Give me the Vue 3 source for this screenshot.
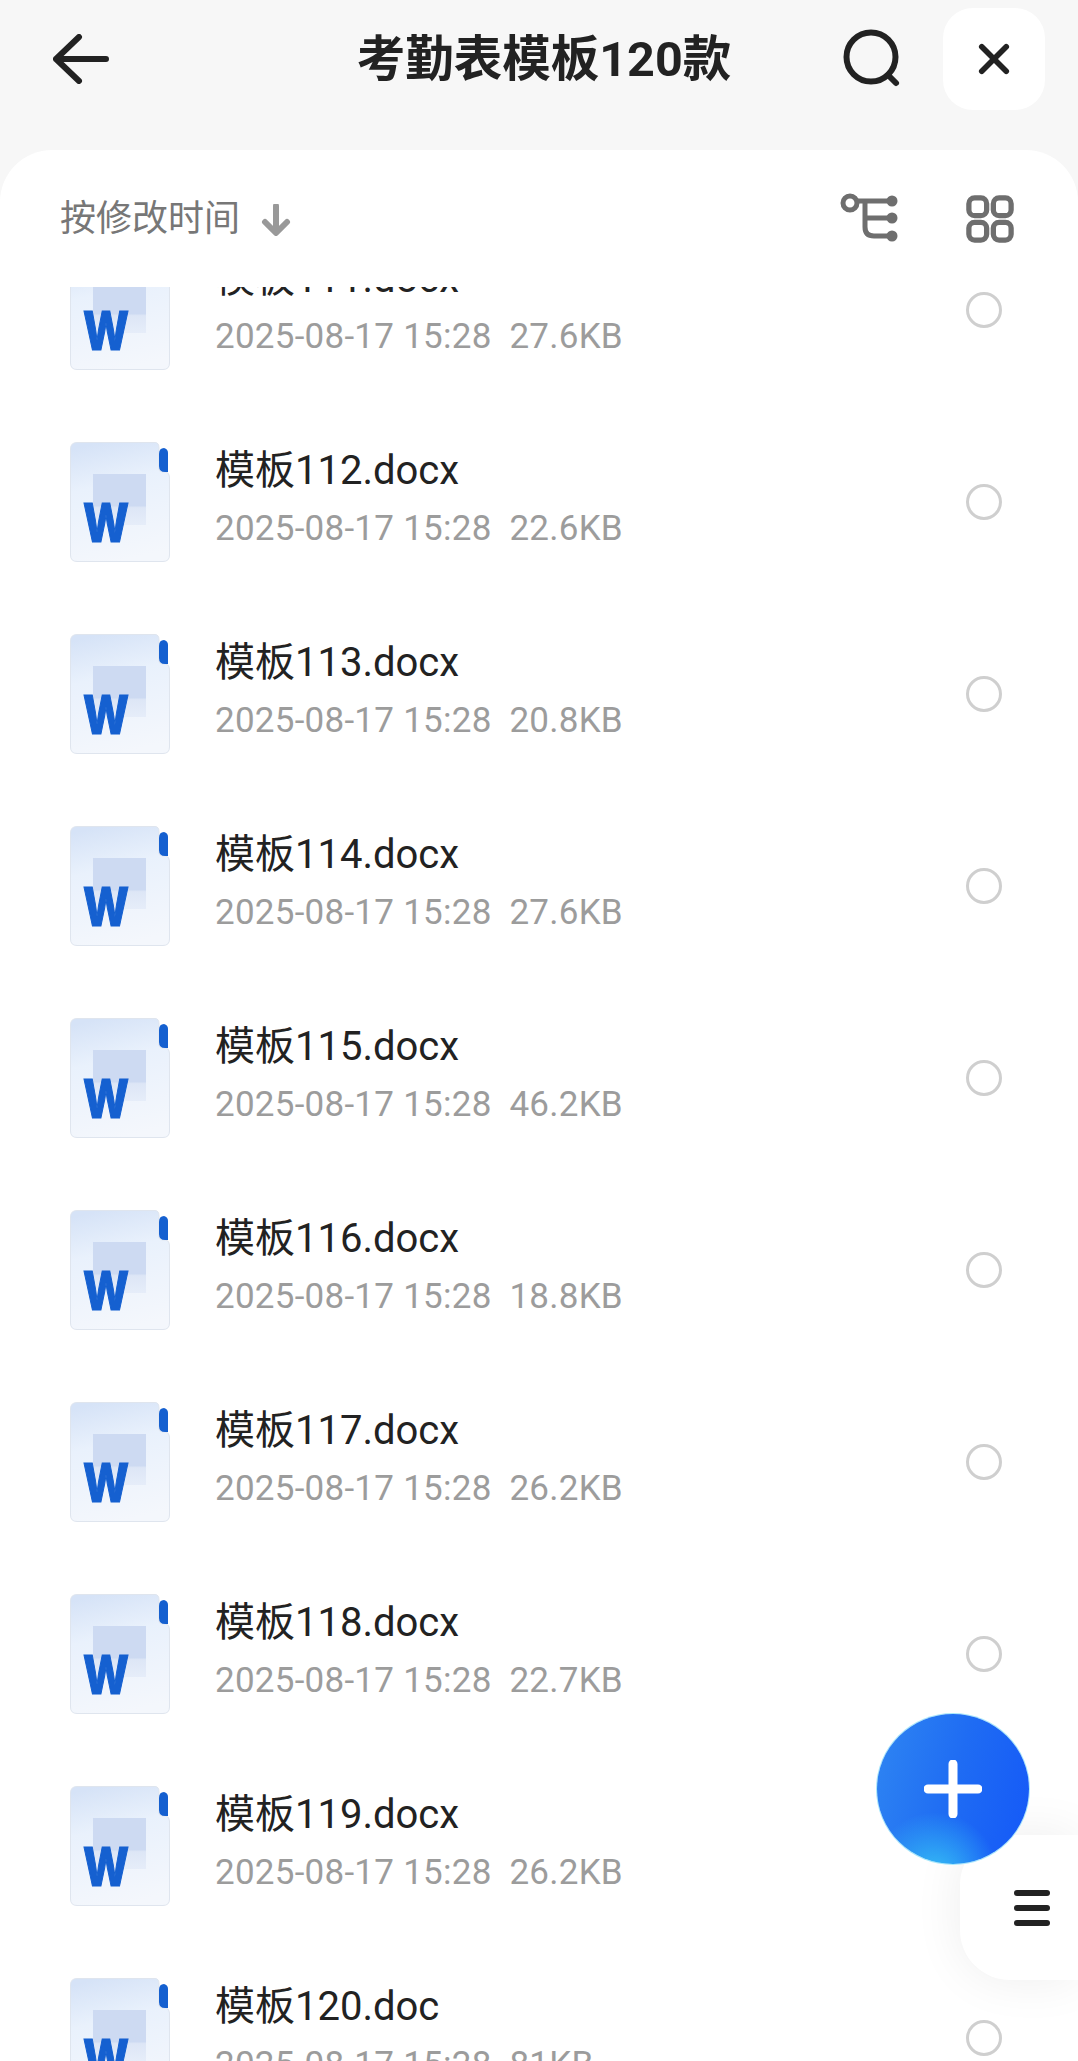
<script setup>
const files = [
  { name: '模板111.docx', size: '27.6KB' },
  { name: '模板112.docx', size: '22.6KB' },
  { name: '模板113.docx', size: '20.8KB' },
  { name: '模板114.docx', size: '27.6KB' },
  { name: '模板115.docx', size: '46.2KB' },
  { name: '模板116.docx', size: '18.8KB' },
  { name: '模板117.docx', size: '26.2KB' },
  { name: '模板118.docx', size: '22.7KB' },
  { name: '模板119.docx', size: '26.2KB' },
  { name: '模板120.doc', size: '81KB' },
]
</script>

<template>
  <div class="page">
    <header class="header">
      <svg class="back" width="56" height="50" viewBox="0 0 56 50" fill="none">
        <path d="M26 3 L3 25 L26 47 M3 25 H53" stroke="#222" stroke-width="6" stroke-linecap="round" stroke-linejoin="round" />
      </svg>
      <h1 class="title">考勤表模板120款</h1>
      <svg class="search" width="60" height="60" viewBox="0 0 60 60" fill="none">
        <circle cx="28" cy="28" r="24.5" stroke="#222" stroke-width="6" />
        <path d="M45 46 L53 54" stroke="#222" stroke-width="6" stroke-linecap="round" />
      </svg>
      <div class="close">
        <svg width="32" height="32" viewBox="0 0 34 34" fill="none">
          <path d="M4 4 L30 30 M30 4 L4 30" stroke="#222" stroke-width="6" stroke-linecap="round" />
        </svg>
      </div>
    </header>

    <section class="sheet">
      <div class="toolbar">
        <span class="sort">按修改时间</span>
        <svg class="sort-arrow" width="30" height="32" viewBox="0 0 30 32" fill="none">
          <path d="M15 2 V28 M4 18 L15 29 L26 18" stroke="#999" stroke-width="6" stroke-linecap="round" stroke-linejoin="round" />
        </svg>
        <svg class="tree" width="60" height="52" viewBox="0 0 60 52" fill="none">
          <circle cx="10" cy="10" r="7" stroke="#6e6e6e" stroke-width="5" />
          <path d="M17 8 H52 M25 8 V34 Q25 43 34 43 H52 M25 25 H52" stroke="#6e6e6e" stroke-width="5" />
          <circle cx="52" cy="8" r="5.5" fill="#6e6e6e" />
          <circle cx="52" cy="25" r="5.5" fill="#6e6e6e" />
          <circle cx="52" cy="43" r="5.5" fill="#6e6e6e" />
        </svg>
        <svg class="grid" width="48" height="48" viewBox="0 0 50 50" fill="none" stroke="#6e6e6e" stroke-width="5.5">
          <rect x="3" y="3" width="18.5" height="18.5" rx="6" />
          <rect x="28.5" y="3" width="18.5" height="18.5" rx="6" />
          <rect x="3" y="28.5" width="18.5" height="18.5" rx="6" />
          <rect x="28.5" y="28.5" width="18.5" height="18.5" rx="6" />
        </svg>
      </div>

      <div class="list">
        <div class="rows">
          <div v-for="file in files" :key="file.name" class="row">
            <svg class="doc" width="100" height="120" viewBox="0 0 100 120" fill="none">
              <defs>
                <linearGradient id="docBg" x1="0.3" y1="0" x2="0.5" y2="1">
                  <stop offset="0" stop-color="#d6e3f7" />
                  <stop offset="0.35" stop-color="#e9f1fc" />
                  <stop offset="1" stop-color="#f4f7fc" />
                </linearGradient>
                <linearGradient id="docInner" x1="0" y1="0" x2="0" y2="1">
                  <stop offset="0" stop-color="#cddaf2" />
                  <stop offset="0.62" stop-color="#cddaf2" />
                  <stop offset="0.66" stop-color="#dde6f6" />
                  <stop offset="1" stop-color="#e6edf9" />
                </linearGradient>
              </defs>
              <path d="M7 .5 H85 Q89 .5 89 6 V27 Q89 30 93 30 H96 Q99.5 31 99.5 35 V113 Q99.5 119.5 93 119.5 H7 Q.5 119.5 .5 113 V7 Q.5 .5 7 .5 Z" fill="url(#docBg)" stroke="#dfe5ee" />
              <rect x="23" y="32" width="53" height="51" fill="url(#docInner)" />
              <path d="M89 12 Q89 6 94 6 Q98 7 98 11 V30 H95 Q89 30 89 24 Z" fill="#1560d0" />
              <text class="doc-w" x="13" y="100" textLength="46" lengthAdjust="spacingAndGlyphs">W</text>
            </svg>
            <div class="info">
              <div class="name">{{ file.name }}</div>
              <div class="meta">2025-08-17 15:28&nbsp;&nbsp;{{ file.size }}</div>
            </div>
            <div class="radio"></div>
          </div>
        </div>
      </div>
    </section>

    <div class="side-tab">
      <span></span><span></span><span></span>
    </div>

    <button class="fab" type="button">
      <svg width="58" height="58" viewBox="0 0 58 58" fill="none">
        <path d="M29 4 V54 M4 29 H54" stroke="#fff" stroke-width="9" stroke-linecap="round" />
      </svg>
    </button>
  </div>
</template>

<style>
html, body {
  margin: 0;
  background: #fff;
  overflow: hidden;
}
</style>

<style scoped>
.page {
  position: relative;
  width: 1078px;
  height: 2061px;
  overflow: hidden;
  background: #f7f7f7;
  font-family: Roboto, "Noto Sans CJK SC", "Noto Sans", sans-serif;
}
.header {
  position: relative;
  height: 150px;
  box-sizing: border-box;
  display: flex;
  align-items: flex-start;
}
.back {
  margin: 34px 0 0 53px;
}
.title {
  position: absolute;
  left: 0;
  right: 0;
  top: 25px;
  margin: 0;
  text-align: center;
  font-size: 48.5px;
  line-height: 70px;
  font-weight: 700;
  color: #222;
  transform: translateX(5px);
}
.search {
  margin: 29px 0 0 734px;
}
.close {
  width: 102px;
  height: 102px;
  margin: 8px 0 0 40px;
  border-radius: 30px;
  background: #fff;
  display: flex;
  align-items: center;
  justify-content: center;
}
.sheet {
  background: #fff;
  border-radius: 52px 52px 0 0;
  height: 1911px;
  overflow: hidden;
}
.toolbar {
  height: 137px;
  display: flex;
  align-items: center;
  padding-left: 60px;
  padding-bottom: 2px;
  box-sizing: border-box;
}
.sort {
  margin-top: 3px;
  font-size: 36px;
  line-height: 50px;
  color: #777;
}
.sort-arrow {
  margin: 4px 0 0 21px;
}
.tree {
  margin: 2px 0 0 auto;
  transform: translateX(-2px);
}
.grid {
  margin: 2px 64px 0 64px;
}
.list {
  height: 1774px;
  overflow: hidden;
}
.rows {
  margin-top: -73px;
}
.row {
  height: 192px;
  display: flex;
  align-items: center;
  padding-left: 70px;
  padding-right: 76px;
}
.doc {
  flex: none;
}
.doc-w {
  font-family: Inter, "Liberation Sans", sans-serif;
  font-weight: 800;
  font-size: 54px;
  fill: #1560d0;
  stroke: #1560d0;
  stroke-width: 1.2px;
}
.info {
  margin-left: 45px;
  padding-bottom: 8px;
}
.name {
  font-size: 40px;
  line-height: 50px;
  color: #222;
}
.meta {
  margin-top: 12px;
  font-size: 35px;
  line-height: 42px;
  letter-spacing: 0.25px;
  color: #9c9c9c;
  white-space: pre;
}
.radio {
  margin-left: auto;
  width: 36px;
  height: 36px;
  box-sizing: border-box;
  border: 3px solid #cfcfcf;
  border-radius: 50%;
}
.side-tab {
  position: absolute;
  left: 960px;
  top: 1835px;
  width: 118px;
  height: 145px;
  box-sizing: border-box;
  padding-left: 54px;
  border-radius: 50px 0 0 50px;
  background: #fff;
  box-shadow: 0 0 50px rgba(0, 0, 0, 0.07);
  display: flex;
  flex-direction: column;
  justify-content: center;
  gap: 9px;
}
.side-tab span {
  width: 36px;
  height: 6px;
  border-radius: 3px;
  background: #222;
}
.fab {
  position: absolute;
  left: 877px;
  top: 1714px;
  width: 152px;
  height: 150px;
  padding: 0;
  border: 0;
  border-radius: 50%;
  background:
    radial-gradient(circle at 38% 108%, #35c0f5 0, rgba(53, 192, 245, 0) 34%),
    linear-gradient(105deg, #2f86f2 0%, #1f6cf3 50%, #1458f8 100%);
  box-shadow: 0 0 0 1px #a8e8fb;
  display: flex;
  align-items: center;
  justify-content: center;
}
</style>
